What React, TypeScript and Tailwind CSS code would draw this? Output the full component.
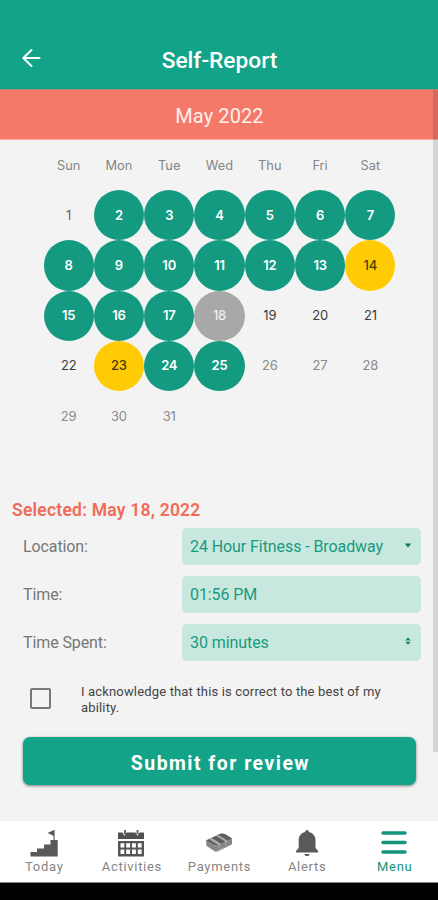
import React from "react";

type Tone = "done" | "pending" | "selected" | "plain" | "dark" | "muted";

const toneClass: Record<Tone, string> = {
  done: "bg-[#149a80] text-white font-semibold",
  pending: "bg-[#ffcb05] text-[#4a3d00] font-medium",
  selected: "bg-[#a8a8a8] text-[#ececec] font-medium",
  plain: "text-[#666]",
  dark: "text-[#3c3c3c]",
  muted: "text-[#8a8a8a]",
};

function toneOf(day: number): Tone {
  if (day === 14 || day === 23) return "pending";
  if (day === 18) return "selected";
  if (day === 1) return "plain";
  if (day >= 19 && day <= 22) return "dark";
  if (day > 25) return "muted";
  return "done";
}

const weekdays = ["Sun", "Mon", "Tue", "Wed", "Thu", "Fri", "Sat"];
const days = Array.from({ length: 31 }, (_, i) => i + 1);

function StairsIcon() {
  return (
    <svg width="28" height="28" viewBox="0 0 28 28" fill="#595959">
      <path d="M0.500 23h6.500v-3.500h7v-4h6.500v-4.500h7.200v16.500H0.500z" />
      <path d="M23.500 1h1.100v10h-1.100z" />
      <path d="M24 1v6L17.500 4z" />
    </svg>
  );
}

function CalendarIcon() {
  return (
    <svg width="28" height="28" viewBox="0 0 28 28">
      <path d="M1 3.500h4.500l2 3.500 2-3.500h9l2 3.500 2-3.500H27V10H1z" fill="#505050" />
      <path d="M7 1h2v4.500H7zM19.500 1h2v4.500h-2z" fill="#6a6a6a" />
      <path d="M1 12h26v15.500H1z" fill="#555" />
      <path d="M3.500 14.300h3.800v4.200H3.500zM9.200 14.300h3.900v4.200H9.200zM15 14.300h3.900v4.200H15zM20.800 14.300h3.800v4.200h-3.800zM3.500 20.500h3.800v4.500H3.500zM9.200 20.500h3.900v4.500H9.200zM15 20.500h3.900v4.500H15zM20.800 20.500h3.800v4.500h-3.800z" fill="#fff" />
    </svg>
  );
}

function CashIcon() {
  return (
    <svg width="28" height="28" viewBox="0 0 28 28">
      <path d="M1 11.500L16 4.500l4 .5 7 4.500v6L13 22.500l-3 .3L1.500 17z" fill="#9a9a9a" />
      <path d="M1 11.500L16 4.500l4 .5 7 4.500-14 7-3-.3z" fill="#5f5f5f" />
      <path d="M6.500 9l9 5.500v5.500l-2 1.500v-5.500l-9-5.500zM13 6l9 5.300v5l-2 1v-5l-9-5.300z" fill="#b0b0b0" />
      <path d="M1.500 13.500l9.500 5.500L27 11.500M1.500 15.500l9.500 5.500L27 13.500" stroke="#696969" strokeWidth=".8" fill="none" />
    </svg>
  );
}

function BellIcon() {
  return (
    <svg width="28" height="28" viewBox="0 0 28 28" fill="#595959">
      <path d="M14 1c1.200 0 1.900.9 1.800 2 4.300 1 6.700 4 6.700 8.200v7.800l2.700 3v1.500H3V22l2.700-3v-7.800C5.700 7 8 4 12.200 3c-.1-1.100.6-2 1.800-2z" />
      <path d="M11.500 25h5c-.3 1.500-1.200 2.200-2.500 2.200S11.800 26.500 11.500 25z" />
    </svg>
  );
}

function MenuIcon() {
  return (
    <svg width="28" height="28" viewBox="0 0 28 28" stroke="#13957c" strokeWidth="3.500" strokeLinecap="round">
      <path d="M3 4h22M3 13.500h22M3 23h22" />
    </svg>
  );
}

const tabs = [
  { label: "Today", icon: <StairsIcon /> },
  { label: "Activities", icon: <CalendarIcon /> },
  { label: "Payments", icon: <CashIcon /> },
  { label: "Alerts", icon: <BellIcon /> },
  { label: "Menu", icon: <MenuIcon />, active: true },
];

function Field({ label, value, mark }: { label: string; value: string; mark?: React.ReactNode }) {
  return (
    <div className="flex h-9 items-center">
      <span className="w-[159px] pt-0.5 text-[16px] leading-9 tracking-[-0.1px] text-[#777]">{label}</span>
      <div className="flex h-[37px] w-[239px] shrink-0 items-center justify-between rounded-[5px] bg-[#c8e8df] pr-[9px] pl-2 text-[16px] text-[#189a7d]">
        <span className="pt-0.5 tracking-[-0.080px] whitespace-nowrap">{value}</span>
        {mark}
      </div>
    </div>
  );
}

export default function App() {
  return (
    <div className="relative flex h-[900px] w-[438px] flex-col overflow-hidden bg-[#f3f3f3] font-[Roboto,sans-serif]">
      <header className="grid h-[89px] shrink-0 grid-cols-[62px_1fr_62px] bg-[#12a388] pt-[28px]">
        <div className="flex h-[60px] items-center pl-[21px]">
          <svg width="20" height="20" viewBox="0 0 20 20" fill="none" stroke="#fff" strokeWidth="2" strokeLinecap="round" strokeLinejoin="round">
            <path d="M18.500 10H2.500M10.500 2L2.300 10l8.200 8" />
          </svg>
        </div>
        <h1 className="pl-px text-center text-[22.700px] leading-[65px] font-medium text-white">Self-Report</h1>
      </header>
      <div className="h-[51px] shrink-0 border-t border-[#b18873] border-b border-b-[#f6aaa0] bg-[#f57969] pl-px text-center text-[20px] leading-[52px] tracking-[0.1px] text-[#fff0ed]">
        May 2022
      </div>

      <main className="h-[681px] shrink-0">
        <section className="ml-[43.500px] h-[357px] w-[352px] font-[Inter,sans-serif]">
          <div className="grid h-[50.200px] grid-cols-7 text-center text-[12.800px] leading-[51px] text-[#858585]">
            {weekdays.map((d) => (
              <span key={d}>{d}</span>
            ))}
          </div>
          <div className="grid auto-rows-[50.300px] grid-cols-7">
            {days.map((d) => (
              <div key={d} className={`flex items-center justify-center rounded-full text-[13px] tracking-[-0.2px] ${toneClass[toneOf(d)]}`}>
                {d}
              </div>
            ))}
          </div>
        </section>

        <h2 className="h-[31px] pl-3 text-[17.500px] leading-[27px] font-semibold tracking-[0.230px] text-[#f26a58]">Selected: May 18, 2022</h2>
        <div className="flex flex-col gap-3 pl-[23px]">
          <Field
            label="Location:"
            value="24 Hour Fitness - Broadway"
            mark={
              <svg width="8" height="5" viewBox="0 0 8 5" fill="#0f7f50" className="mb-0.5">
                <path d="M0.500 0.500h7L4 4.500z" />
              </svg>
            }
          />
          <Field label="Time:" value="01:56 PM" />
          <Field
            label="Time Spent:"
            value="30 minutes"
            mark={
              <svg width="8" height="8" viewBox="0 0 8 8" fill="#0f8c66" className="mb-0.5">
                <path d="M1.300 3.500L4 .3l2.700 3.200zM1.300 4.700h5.400L4 7.800z" />
              </svg>
            }
          />
        </div>
        <div className="flex h-[77px] pl-[30px]">
          <div className="mt-[28px] h-[21px] w-[21px] rounded-[2px] border-2 border-[#777]" />
          <p className="mt-[24px] ml-[30px] w-[320px] text-[13px] leading-4 tracking-[0.160px] text-[#444]">
            I acknowledge that this is correct to the best of my ability.
          </p>
        </div>
        <button className="ml-[23px] block h-[48px] w-[393px] rounded-[7px] bg-[#12a388] pt-0.5 pl-0.5 text-[19.400px] leading-[49px] font-bold tracking-[1.500px] text-white shadow-[0_1px_3px_rgba(0,0,0,0.500)]">
          Submit for review
        </button>
      </main>

      <nav className="grid h-[61px] shrink-0 grid-cols-5 bg-white">
        {tabs.map((t) => (
          <div key={t.label} className="flex flex-col items-center pt-2">
            {t.icon}
            <span className={`pl-px text-[13px] leading-[20px] tracking-[0.700px] ${t.active ? "text-[#13957c]" : "text-[#858585]"}`}>{t.label}</span>
          </div>
        ))}
      </nav>
      <div className="h-[18px] border-t border-[#888] bg-black" />

      <div className="absolute top-[90px] right-0 h-[662px] w-[5px] bg-black/12" />
    </div>
  );
}
